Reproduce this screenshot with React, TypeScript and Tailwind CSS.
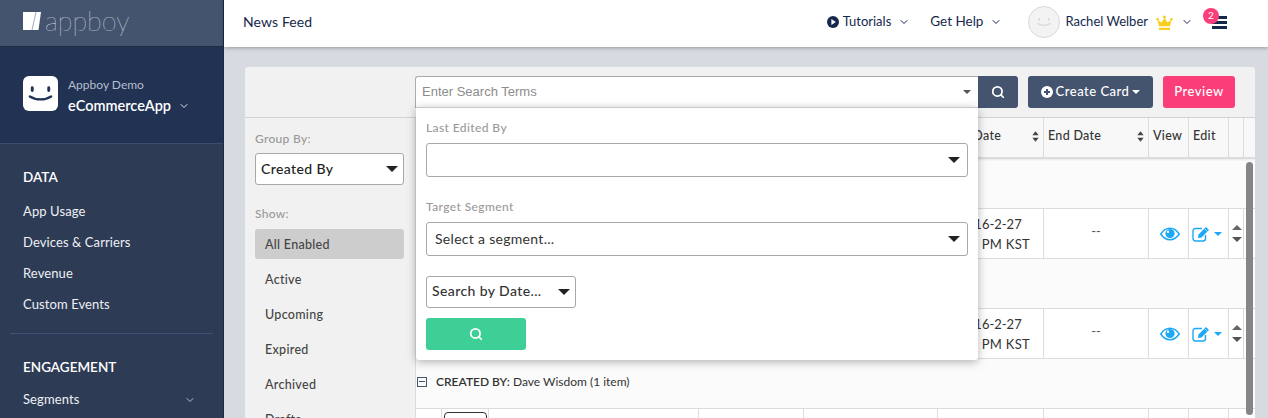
import React from "react";
import { ChevronDown, Search } from "lucide-react";

const columns = ["w-[26px]", "w-[47px]", "w-[210px]", "w-[105px]", "w-[134px]", "w-[106px]", "w-[105px]", "w-[40px]", "w-[40px]", "w-[15px]"];

function Caret({ className }: { className: string }) {
  return <span className={`inline-block border-x-transparent ${className}`} />;
}

function Smile({ className, stroke }: { className: string; stroke: string }) {
  return (
    <svg viewBox="0 0 36 36" className={className} fill="none" stroke={stroke}>
      <path d="M9.500 12v3M26.500 12v3" strokeWidth="3" strokeLinecap="round" />
      <path d="M7 21c6 4 16 4 22 0" strokeWidth="2.400" strokeLinecap="round" />
    </svg>
  );
}

function SortIcon() {
  return (
    <svg viewBox="0 0 8 12" className="h-[11px] w-[7px] fill-[#444]">
      <path d="M4 0l3.600 4.600H.4zM4 12L.4 7.400h7.200z" />
    </svg>
  );
}

function EyeIcon() {
  return (
    <svg viewBox="0 0 20 14" className="h-[14px] w-[20px]" fill="none">
      <path d="M.8 7C3.200 3.200 6.400 1.300 10 1.300S16.800 3.200 19.200 7c-2.400 3.800-5.600 5.700-9.200 5.700S3.200 10.800.8 7z" stroke="#1ea7f5" strokeWidth="1.500" />
      <circle cx="10" cy="6.500" r="4.600" fill="#1ea7f5" />
      <circle cx="8" cy="4.800" r="1.200" fill="#fff" />
    </svg>
  );
}

function EditIcon() {
  return (
    <svg viewBox="0 0 19 16" className="h-[16px] w-[19px]" fill="none">
      <path d="M10 2.500H3.500a2.500 2.500 0 0 0-2.500 2.500v7.500A2.500 2.500 0 0 0 3.500 15H11a2.500 2.500 0 0 0 2.500-2.500V9" stroke="#1ea7f5" strokeWidth="1.400" />
      <path d="M6.500 8.500L14 1l3 3-7.500 7.500-3.500.5z" fill="#1ea7f5" />
      <path d="M13 3l2.500 2.500" stroke="#fff" strokeWidth="0.600" />
    </svg>
  );
}

function NavSection({ title, items, listClass }: { title: string; items: string[]; listClass: string }) {
  return (
    <div>
      <div className="text-[13.5px] font-semibold leading-[20px] text-white">{title}</div>
      <div className={`flex flex-col gap-[11px] ${listClass}`}>
        {items.map((item) => (
          <div key={item} className="flex h-[20px] items-center justify-between pr-[27px] text-[13px] tracking-[0.1px] text-[#eef0f4]">
            {item}
            {item === "Segments" && <ChevronDown size={12} className="text-[#b4bccb]" />}
          </div>
        ))}
      </div>
    </div>
  );
}

function Sidebar() {
  return (
    <aside className="flex w-[224px] shrink-0 flex-col border-r border-[#1d2a42] bg-[#2d3b55]">
      <div className="flex h-[47px] items-center gap-[4px] border-b border-[#1d2a42] bg-[#44546f] pb-[5px] pl-[23px]">
        <svg viewBox="0 0 18 18" className="h-[18px] w-[18px]">
          <path d="M0 0h18l-2.500 18H0z" fill="#fff" />
          <path d="M13 0L9 18" stroke="#8c97a9" strokeWidth="0.800" />
        </svg>
        <span className="text-[27px] font-thin leading-[30px] text-white">appboy</span>
      </div>
      <div className="flex h-[97px] items-start gap-[10px] border-b border-[#3a4c70] bg-[#213253] pl-[23px] pt-[29px]">
        <div className="flex h-[35px] w-[35px] items-center justify-center rounded-[6px] bg-white">
          <Smile className="h-[35px] w-[35px]" stroke="#213253" />
        </div>
        <div>
          <div className="mt-[1px] text-[12px] leading-[16px] text-[#b5bdcc]">Appboy Demo</div>
          <div className="mt-[3px] flex items-center gap-[7px] text-[14.5px] font-semibold leading-[20px] text-white">
            eCommerceApp
            <ChevronDown size={12} className="text-[#e5e8ee]" />
          </div>
        </div>
      </div>
      <div className="px-[23px] pt-[23px]">
        <NavSection title="DATA" listClass="mt-[15px]" items={["App Usage", "Devices & Carriers", "Revenue", "Custom Events"]} />
      </div>
      <div className="mx-[10px] mt-[18px] border-t border-[#41507a]" />
      <div className="pl-[23px] pt-[23px]">
        <NavSection title="ENGAGEMENT" listClass="mt-[13px]" items={["Segments"]} />
      </div>
    </aside>
  );
}

function TopBar() {
  return (
    <header className="relative z-10 flex h-[47px] shrink-0 items-center bg-white pb-[3px] pl-[19px] text-[13.5px] text-[#14284b] shadow-[0_1px_4px_rgba(0,0,0,0.3)]">
      <div className="pb-px text-[14px] tracking-[0.1px]">News Feed</div>
      <div className="ml-auto flex items-center">
        <svg viewBox="0 0 12 12" className="mr-[4px] h-[12px] w-[12px]">
          <circle cx="6" cy="6" r="6" fill="#14284b" />
          <path d="M4.400 3l4.400 3-4.400 3z" fill="#fff" />
        </svg>
        <span className="text-[13px]">Tutorials</span>
        <ChevronDown size={12} className="ml-[7px]" />
        <span className="ml-[20px] pb-px">Get Help</span>
        <ChevronDown size={12} className="ml-[7px]" />
        <div className="ml-[26px] flex h-[32px] w-[32px] items-center justify-center rounded-full border border-[#d8d8d8] bg-[#f3f3f3]">
          <Smile className="h-[20px] w-[20px]" stroke="#d9d9d9" />
        </div>
        <span className="ml-[5px] text-[13px]">Rachel Welber</span>
        <svg viewBox="0 0 18 16" className="ml-[8px] h-[15px] w-[17px] fill-[#fbcd1e]">
          <circle cx="9" cy="2" r="1.600" />
          <circle cx="1.600" cy="4.500" r="1.400" />
          <circle cx="16.400" cy="4.500" r="1.400" />
          <path d="M9 3l3.200 5 4.300-3-1.600 7H3.100L1.500 5l4.300 3zM3.200 13.500h11.600V16H3.200z" />
        </svg>
        <ChevronDown size={12} className="ml-[8px]" />
        <div className="relative ml-[19px] mr-[41px] flex w-[15px] flex-col gap-[2px]">
          <span className="h-[3px] bg-[#14284b]" />
          <span className="h-[3px] bg-[#14284b]" />
          <span className="h-[3px] bg-[#14284b]" />
          <span className="absolute left-[-9px] top-[-8px] flex h-[16px] w-[16px] items-center justify-center rounded-full bg-[#fb3e79] text-[10px] text-white">2</span>
        </div>
      </div>
    </header>
  );
}

function Toolbar() {
  return (
    <div className="relative z-20 flex h-[51px] shrink-0 items-start border-b border-[#d2d2d2] pl-[170px] pt-[9px]">
      <div className="relative h-[32px] w-[563px]">
        <div className="flex h-[32px] items-center justify-between rounded-tl-[3px] border border-r-0 border-[#aaa] bg-white pl-[6px] pr-[7px] font-['Liberation_Sans',sans-serif] text-[13px] text-[#8c8c8c]">
          Enter Search Terms
          <Caret className="border-x-[4px] border-t-[4px] border-t-[#555]" />
        </div>
        <SearchPopover />
      </div>
      <button className="flex h-[32px] w-[40px] items-center justify-center rounded-r-[3px] bg-[#44546f] text-white">
        <Search size={14} strokeWidth={3} />
      </button>
      <button className="ml-[10px] flex h-[32px] w-[125px] items-center justify-center gap-[3px] rounded-[3px] bg-[#44546f] text-[13px] font-medium tracking-[0.5px] text-white">
        <svg viewBox="0 0 12 12" className="h-[12px] w-[12px]">
          <circle cx="6" cy="6" r="6" fill="#fff" />
          <path d="M6 3v6M3 6h6" stroke="#44546f" strokeWidth="2" />
        </svg>
        Create Card
        <Caret className="border-x-[4px] border-t-[4px] border-t-white" />
      </button>
      <button className="ml-[10px] h-[32px] w-[72px] rounded-[3px] bg-[#fb3e79] text-[13px] font-medium tracking-[0.5px] text-white">Preview</button>
    </div>
  );
}

function SearchPopover() {
  return (
    <div className="absolute left-px top-[31px] h-[253px] w-[562px] rounded-b-[3px] border-t border-[#c8c8c8] bg-white px-[10px] pt-[12px] shadow-[0_2px_10px_rgba(0,0,0,0.3)]">
      <div className="text-[12px] font-medium leading-[16px] tracking-[0.4px] text-[#9a9a9a]">Last Edited By</div>
      <div className="mt-[7px] flex h-[34px] items-center justify-end rounded-[3px] border border-[#a8a8a8] pr-[7px]">
        <Caret className="border-x-[6px] border-t-[6px] border-t-[#222]" />
      </div>
      <div className="mt-[22px] text-[12px] font-medium leading-[16px] tracking-[0.4px] text-[#9a9a9a]">Target Segment</div>
      <div className="mt-[7px] flex h-[34px] items-center justify-between rounded-[3px] border border-[#a8a8a8] pl-[8px] pr-[7px] text-[14px] tracking-[0.3px] text-[#333]">
        <span className="pb-[2px]">Select a segment...</span>
        <Caret className="border-x-[6px] border-t-[6px] border-t-[#222]" />
      </div>
      <div className="mt-[20px] flex h-[32px] w-[150px] items-center justify-between rounded-[3px] border border-[#a8a8a8] pl-[5px] pr-[5px] text-[14px] font-medium tracking-[0.4px] text-[#333]">
        <span className="pb-[3px]">Search by Date...</span>
        <Caret className="border-x-[6px] border-t-[6px] border-t-[#222]" />
      </div>
      <button className="mt-[10px] flex h-[32px] w-[100px] items-center justify-center rounded-[3px] bg-[#3ecf96] text-white">
        <Search size={14} strokeWidth={3} />
      </button>
    </div>
  );
}

function FilterPanel() {
  const filters = ["All Enabled", "Active", "Upcoming", "Expired", "Archived", "Drafts"];
  return (
    <div className="h-[300px] w-[170px] shrink-0 overflow-hidden pl-[10px] pr-[11px] pt-[13px]">
      <div className="text-[12px] font-medium leading-[16px] tracking-[0.3px] text-[#999]">Group By:</div>
      <div className="mt-[6px] flex h-[32px] items-center justify-between rounded-[3px] border border-[#a8a8a8] bg-white pl-[5px] pr-[5px] text-[14px] font-medium tracking-[0.4px] text-[#222]">
        <span className="pb-[2px]">Created By</span>
        <Caret className="border-x-[6px] border-t-[6px] border-t-[#222]" />
      </div>
      <div className="mt-[21px] text-[12px] font-medium leading-[16px] tracking-[0.3px] text-[#999]">Show:</div>
      <div className="mt-[7px] flex flex-col gap-[5px]">
        {filters.map((f, i) => (
          <div
            key={f}
            className={`flex h-[30px] items-center rounded-[3px] pl-[10px] pt-[3px] text-[12.5px] font-medium tracking-[0.3px] text-[#444] ${i === 0 ? "bg-[#cdcdcd]" : ""}`}
          >
            {f}
          </div>
        ))}
      </div>
    </div>
  );
}

function HeaderRow() {
  const labels: [number, string, boolean][] = [
    [0, "", false],
    [1, "", false],
    [2, "", false],
    [3, "", false],
    [4, "", false],
    [5, "Start Date", true],
    [6, "End Date", true],
    [7, "View", false],
    [8, "Edit", false],
    [9, "", false],
  ];
  return (
    <div className="relative z-[5] flex h-[41px] shrink-0 border-b-[2px] border-[#dcdcdc] bg-[#f8f8f8] shadow-[0_1px_2px_rgba(0,0,0,0.08)]">
      {labels.map(([i, label, sort]) => (
        <div
          key={i}
          className={`flex items-center justify-between border-r border-[#dcdcdc] pb-[2px] pl-[4px] pr-[4px] text-[12.5px] font-medium tracking-[0.3px] text-[#333] ${columns[i]}`}
        >
          {label}
          {sort && <SortIcon />}
        </div>
      ))}
    </div>
  );
}

function DataRow() {
  return (
    <div className="flex h-[51px] shrink-0 border-y border-[#dcdcdc] bg-white">
      <div className={`border-r border-[#dcdcdc] ${columns[0]}`} />
      <div className={`border-r border-[#dcdcdc] ${columns[1]}`} />
      <div className={`border-r border-[#dcdcdc] ${columns[2]}`} />
      <div className={`border-r border-[#dcdcdc] ${columns[3]}`} />
      <div className={`border-r border-[#dcdcdc] ${columns[4]}`} />
      <div className={`flex flex-col items-center justify-center border-r border-[#dcdcdc] text-[13px] leading-[20px] text-[#333] ${columns[5]}`}>
        <span>2016-2-27</span>
        <span className="tracking-[0.3px]">3:00 PM KST</span>
      </div>
      <div className={`flex items-center justify-center border-r border-[#dcdcdc] pb-[3px] text-[13px] text-[#555] ${columns[6]}`}>--</div>
      <div className={`flex items-center justify-center border-r border-[#dcdcdc] pl-[2px] ${columns[7]}`}>
        <EyeIcon />
      </div>
      <div className={`flex items-center gap-[3px] border-r border-[#dcdcdc] pl-[3px] ${columns[8]}`}>
        <EditIcon />
        <Caret className="border-x-[4px] border-t-[4px] border-t-[#1ea7f5]" />
      </div>
      <div className={`flex flex-col items-center justify-center gap-[7px] border-r border-[#dcdcdc] pl-px ${columns[9]}`}>
        <span className="border-x-[5px] border-b-[5px] border-x-transparent border-b-[#666]" />
        <Caret className="border-x-[5px] border-t-[5px] border-t-[#555]" />
      </div>
    </div>
  );
}

function GroupRow({ name }: { name?: string }) {
  return (
    <div className="flex h-[49px] shrink-0 items-center gap-[9px] pb-[4px] pl-px text-[12px] text-[#333]">
      {name && (
        <>
          <span className="flex h-[10px] w-[10px] items-center justify-center border border-[#44546f]">
            <span className="h-px w-[6px] bg-[#44546f]" />
          </span>
          <span>
            <b className="font-semibold">CREATED BY:</b> {name}
          </span>
        </>
      )}
    </div>
  );
}

function TableArea() {
  return (
    <div className="relative flex min-w-0 flex-1 flex-col overflow-hidden border-l border-[#dcdcdc] bg-[#fbfbfb]">
      <HeaderRow />
      <GroupRow />
      <DataRow />
      <GroupRow />
      <DataRow />
      <GroupRow name="Dave Wisdom (1 item)" />
      <div className="flex h-[40px] shrink-0 border-t border-[#dcdcdc] bg-white">
        <div className={`border-r border-[#dcdcdc] ${columns[0]}`} />
        <div className={`border-r border-[#dcdcdc] pl-[2px] pt-[3px] ${columns[1]}`}>
          <div className="h-[30px] w-[43px] rounded-[4px] border border-[#333]" />
        </div>
        <div className={`border-r border-[#dcdcdc] ${columns[2]}`} />
        <div className={`border-r border-[#dcdcdc] ${columns[3]}`} />
        <div className={`border-r border-[#dcdcdc] ${columns[4]}`} />
        <div className={`border-r border-[#dcdcdc] ${columns[5]}`} />
        <div className={`border-r border-[#dcdcdc] ${columns[6]}`} />
        <div className={`border-r border-[#dcdcdc] ${columns[7]}`} />
        <div className={`border-r border-[#dcdcdc] ${columns[8]}`} />
      </div>
      {/* overlay scrollbar */}
      <div className="absolute right-[2px] top-[44px] h-[253px] w-[7px] rounded-full bg-[#858585]" />
    </div>
  );
}

export default function App() {
  return (
    <div className="flex h-[418px] w-[1268px] overflow-hidden bg-[#d7dae0] font-['Lato',sans-serif]">
      <Sidebar />
      <div className="flex min-w-0 flex-1 flex-col">
        <TopBar />
        <main className="min-h-0 flex-1 pl-[21px] pr-[13px] pt-[20px]">
          <div className="flex h-full flex-col rounded-t-[3px] bg-[#f1f1f1]">
            <Toolbar />
            <div className="flex min-h-0 flex-1">
              <FilterPanel />
              <TableArea />
            </div>
          </div>
        </main>
      </div>
    </div>
  );
}
